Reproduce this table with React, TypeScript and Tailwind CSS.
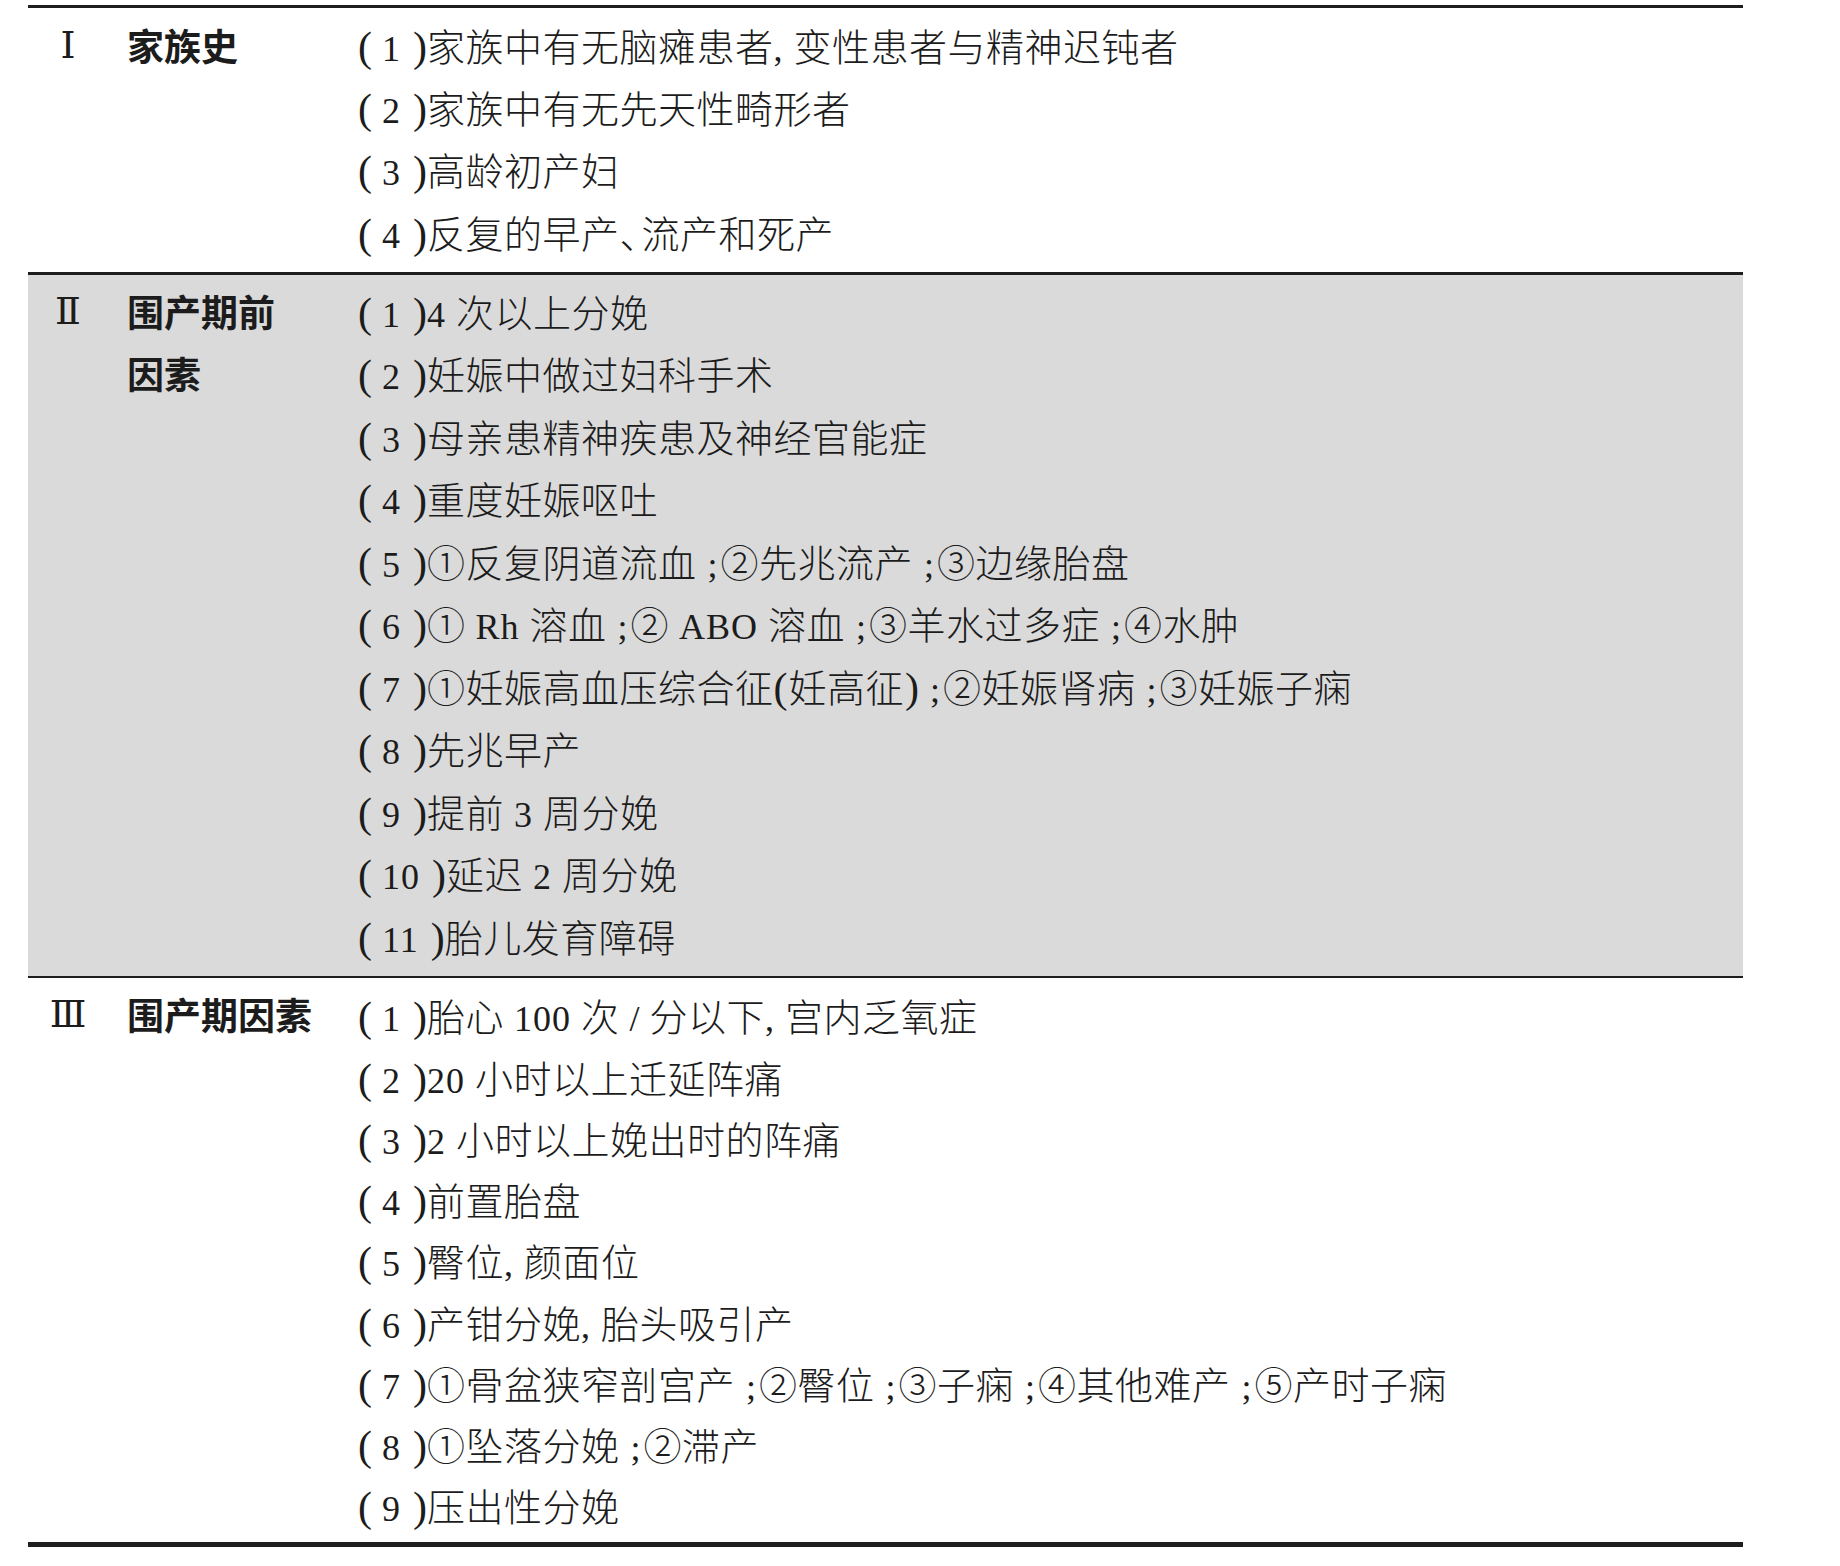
import React from 'react';

type Section = {
  numeral: string;
  label: React.ReactNode;
  gray?: boolean;
  rowClass: string;
  padClass: string;
  items: string[];
};

const sections: Section[] = [
  {
    numeral: 'Ⅰ',
    label: '家族史',
    rowClass: 'h-[62.2px] leading-[62.2px]',
    padClass: 'pt-[6px] pb-[9px]',
    items: [
      '(1)家族中有无脑瘫患者,变性患者与精神迟钝者',
      '(2)家族中有无先天性畸形者',
      '(3)高龄初产妇',
      '(4)反复的早产、流产和死产',
    ],
  },
  {
    numeral: 'Ⅱ',
    label: (
      <>
        围产期前
        <br />
        因素
      </>
    ),
    gray: true,
    rowClass: 'h-[62.5px] leading-[62.5px]',
    padClass: 'pt-[5px] pb-[9px]',
    items: [
      '(1)4 次以上分娩',
      '(2)妊娠中做过妇科手术',
      '(3)母亲患精神疾患及神经官能症',
      '(4)重度妊娠呕吐',
      '(5)①反复阴道流血;②先兆流产;③边缘胎盘',
      '(6)① Rh 溶血;② ABO 溶血;③羊水过多症;④水肿',
      '(7)①妊娠高血压综合征(妊高征);②妊娠肾病;③妊娠子痫',
      '(8)先兆早产',
      '(9)提前 3 周分娩',
      '(10)延迟 2 周分娩',
      '(11)胎儿发育障碍',
    ],
  },
  {
    numeral: 'Ⅲ',
    label: '围产期因素',
    rowClass: 'h-[61.25px] leading-[61.25px]',
    padClass: 'pt-[6px] pb-[6px]',
    items: [
      '(1)胎心 100 次 / 分以下,宫内乏氧症',
      '(2)20 小时以上迁延阵痛',
      '(3)2 小时以上娩出时的阵痛',
      '(4)前置胎盘',
      '(5)臀位,颜面位',
      '(6)产钳分娩,胎头吸引产',
      '(7)①骨盆狭窄剖宫产;②臀位;③子痫;④其他难产;⑤产时子痫',
      '(8)①坠落分娩;②滞产',
      '(9)压出性分娩',
    ],
  },
];

// split an item into CJK runs, latin runs and the narrow punctuation of the book
function renderText(text: string) {
  const parts = text.split(/([()]|[A-Za-z0-9]+|[;,/ 、])/).filter((p) => p !== '');
  return parts.map((p, i) => {
    const prev = parts[i - 1] ?? '';
    const next = parts[i + 1] ?? '';
    if (p === '(') {
      // the item number "( 1 )" is set loose, inner brackets tight
      const loose = /^[0-9]+$/.test(next);
      return (
        <span
          key={i}
          className={`inline-block text-left font-['Liberation_Serif'] text-[42px] font-normal ${loose ? 'w-[24px]' : 'w-[15px]'}`}
        >
          (
        </span>
      );
    }
    if (p === ')') {
      const loose = /^[0-9]+$/.test(prev);
      return (
        <span
          key={i}
          className={`inline-block text-right font-['Liberation_Serif'] text-[42px] font-normal ${loose ? 'w-[26px]' : 'w-[15px]'}`}
        >
          )
        </span>
      );
    }
    if (p === ';') {
      return (
        <span key={i} className="inline-block w-[24px] pr-[3px] text-right font-['Liberation_Serif'] text-[36px]">
          ;
        </span>
      );
    }
    if (p === ',') {
      return (
        <span key={i} className="inline-block w-[20px] text-left font-['Liberation_Serif'] text-[36px]">
          ,
        </span>
      );
    }
    if (p === '、') {
      // the book sets the enumeration comma half width
      return (
        <span key={i} className="tracking-[-16px]">
          、
        </span>
      );
    }
    if (p === ' ') {
      return <span key={i} className="inline-block w-[10px]" />;
    }
    if (p === '/') {
      return (
        <span key={i} className="font-['Liberation_Serif'] text-[36px]">
          /
        </span>
      );
    }
    if (/^[A-Za-z0-9]+$/.test(p)) {
      return (
        <span key={i} className="font-['Liberation_Serif'] text-[36px] tracking-[1px]">
          {p}
        </span>
      );
    }
    return (
      <span key={i} className="tracking-[0.5px]">
        {p}
      </span>
    );
  });
}

function TableSection({ s }: { s: Section }) {
  return (
    <div className={`flex ${s.padClass} ${s.gray ? 'bg-[#dadada]' : 'bg-white'}`}>
      <div className={`w-[80px] shrink-0 text-center font-['Liberation_Serif','DejaVu_Serif',serif] text-[38px] ${s.rowClass}`}>
        {s.numeral}
      </div>
      <div className="w-[250px] shrink-0 pl-[19px] font-['Noto_Sans_CJK_SC',sans-serif] text-[37px] font-bold">
        <div className={s.rowClass}>{s.label}</div>
      </div>
      <div className="flex flex-1 flex-col font-['Noto_Sans_CJK_SC',sans-serif] text-[38px] font-light">
        {s.items.map((it, i) => (
          <div key={i} className={`whitespace-nowrap ${s.rowClass}`}>
            {renderText(it)}
          </div>
        ))}
      </div>
    </div>
  );
}

export default function App() {
  return (
    <div className="h-[1566px] w-[1840px] bg-white pt-[5px] text-[#1c1c1c]">
      <div className="ml-[28px] w-[1715px]">
        <div className="h-[3px] bg-[#1e1e1e]" />
        <TableSection s={sections[0]} />
        <div className="h-[3px] bg-[#1e1e1e]" />
        <TableSection s={sections[1]} />
        <div className="h-[2px] bg-[#1e1e1e]" />
        <TableSection s={sections[2]} />
        <div className="h-[5px] bg-[#1e1e1e]" />
      </div>
    </div>
  );
}
